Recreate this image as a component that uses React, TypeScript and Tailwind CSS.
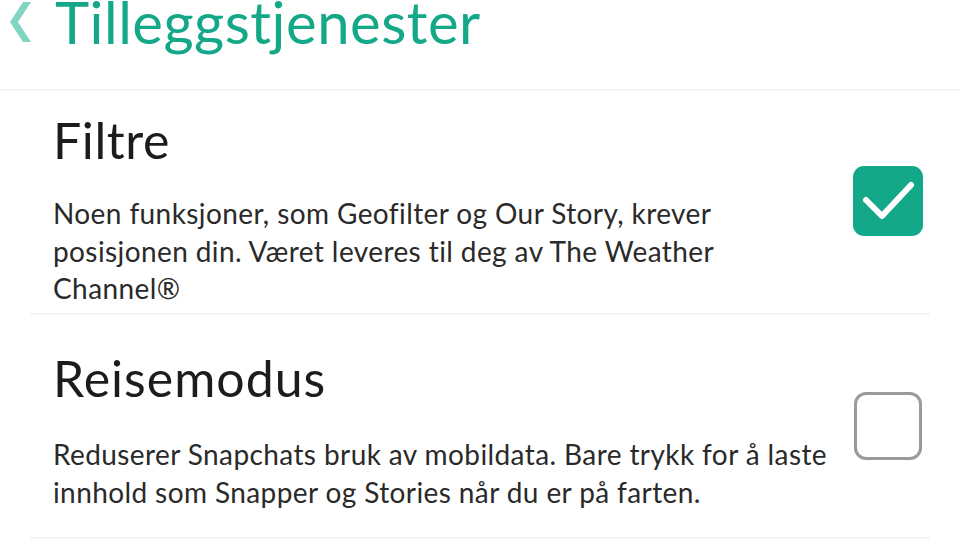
import React from "react";

function Check() {
  return (
    <svg width="70" height="70" viewBox="0 0 70 70" fill="none">
      <path d="M13 34 L29 50 L58 19" stroke="white" strokeWidth="6" strokeLinecap="round" strokeLinejoin="round" />
    </svg>
  );
}

function Chevron() {
  return (
    <svg width="34" height="44" viewBox="0 0 34 44">
      <polygon points="23,2 31,2 18,22 31,42 23,42 10,22" fill="#80d7c1" />
    </svg>
  );
}

export default function App() {
  return (
    <div className="w-[960px] h-[548px] overflow-hidden bg-white" style={{ fontFamily: "Lato, 'Noto Sans', sans-serif" }}>
      <div className="h-[91px] border-b-2 border-[#f3f3f3] flex items-start">
        <div className="w-[55px] flex">
          <Chevron />
        </div>
        <span className="text-[#15a888] text-[58px] leading-[44px] tracking-[0.5px]">Tilleggstjenester</span>
      </div>
      <div className="mx-[30px] h-[224px] border-b-2 border-[#f3f3f3] flex items-start">
        <div className="flex-1 pl-[23px] pt-[20px]">
          <div className="text-[50px] leading-[58px] tracking-[0.6px] text-[#1c1c1c]">Filtre</div>
          <div className="text-[28px] leading-[37.5px] tracking-[0.4px] text-[#2a2a2a] mt-[26px] whitespace-nowrap">
            Noen funksjoner, som Geofilter og Our Story, krever
            <br />
            posisjonen din. Været leveres til deg av The Weather
            <br />
            Channel®
          </div>
        </div>
        <div className="w-[70px] h-[70px] rounded-[11px] bg-[#12a888] mr-[7px] mt-[75px]">
          <Check />
        </div>
      </div>
      <div className="mx-[30px] h-[224px] border-b-2 border-[#f3f3f3] flex items-start">
        <div className="flex-1 pl-[23px] pt-[34px]">
          <div className="text-[50px] leading-[58px] tracking-[1px] text-[#1c1c1c]">Reisemodus</div>
          <div className="text-[28px] leading-[37.5px] tracking-[0.4px] text-[#2a2a2a] mt-[29px] whitespace-nowrap">
            Reduserer Snapchats bruk av mobildata. Bare trykk for å laste
            <br />
            innhold som Snapper og Stories når du er på farten.
          </div>
        </div>
        <div className="w-[68px] h-[68px] rounded-[12px] border-[3px] border-[#9a9a9a] mr-[8px] mt-[77px]" />
      </div>
    </div>
  );
}
